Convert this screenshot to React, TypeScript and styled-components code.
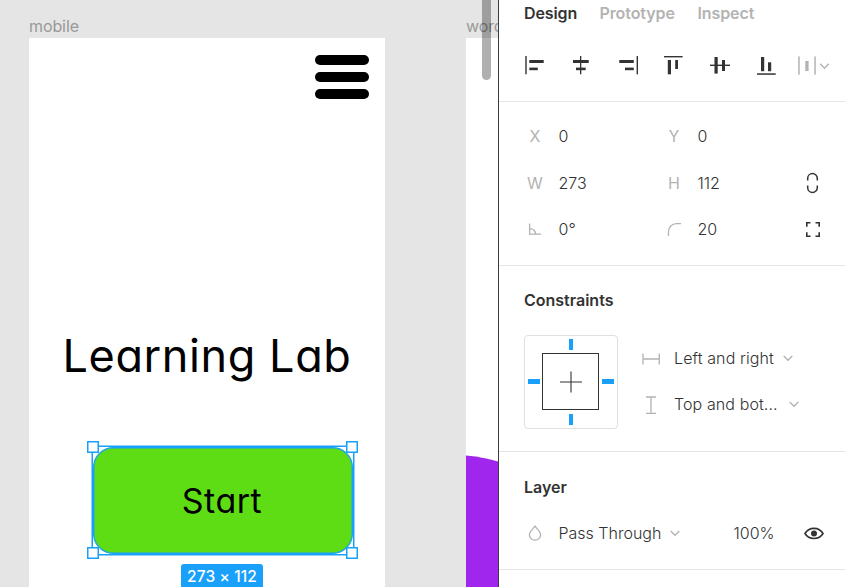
import React from "react";
import styled, { createGlobalStyle } from "styled-components";

const GlobalStyle = createGlobalStyle`
  * { box-sizing: border-box; }
  body { margin: 0; overflow: hidden; background: #fff; }
`;

const BLUE = "#18a0fb";
const INK = "#333333";
const MUTED = "#b3b3b3";

const Editor = styled.div`
  display: flex;
  width: 845px;
  height: 587px;
  overflow: hidden;
  font-family: Inter, "Liberation Sans", sans-serif;
  font-size: 16px;
  color: ${INK};
`;

/* ---------- canvas ---------- */

const Canvas = styled.main`
  position: relative;
  flex: 0 0 499px;
  overflow: hidden;
  background: #e5e5e5;
  border-right: 1px solid #3c3c3c;
`;

const FrameLabel = styled.span<{ $x: number }>`
  position: absolute;
  left: ${(p) => p.$x}px;
  top: 16px;
  line-height: 20px;
  letter-spacing: -0.1px;
  color: #999;
  white-space: nowrap;
`;

const Frame = styled.section<{ $x: number; $w: number }>`
  position: absolute;
  left: ${(p) => p.$x}px;
  top: 37.5px;
  width: ${(p) => p.$w}px;
  height: 640px;
  overflow: hidden;
  background: #fff;
`;

const Burger = styled.div`
  position: absolute;
  left: 315px;
  top: 55px;
  display: grid;
  gap: 7px;
`;

const BurgerBar = styled.i`
  width: 54px;
  height: 10px;
  border-radius: 5px;
  background: #000;
`;

const Title = styled.h1`
  position: absolute;
  left: 62.5px;
  top: 326px;
  margin: 0;
  font-size: 45px;
  line-height: 60px;
  font-weight: 400;
  font-feature-settings: "cv11";
  letter-spacing: 0.6px;
  color: #000;
  white-space: nowrap;
`;

const Disc = styled.div`
  position: absolute;
  left: -182px;
  top: 417.3px;
  width: 336px;
  height: 336px;
  border-radius: 50%;
  background: #a026ed;
`;

const Selection = styled.div`
  position: absolute;
  left: 92px;
  top: 446px;
  width: 262px;
  height: 109px;
  padding: 1px;
  background: #fff;
  box-shadow: inset 0 0 0 1px ${BLUE}, 0 0 0 0.5px ${BLUE};
`;

const StartButton = styled.div`
  display: flex;
  align-items: center;
  justify-content: center;
  height: 107px;
  padding-right: 2px;
  border: 1.5px solid ${BLUE};
  box-shadow: inset 0 0 0 0.5px ${BLUE};
  border-radius: 20px;
  background: #5edc14;
  color: #000;
  font-size: 34px;
  font-feature-settings: "cv11";
  letter-spacing: 0.5px;
`;

const Handle = styled.i<{ $right?: boolean; $bottom?: boolean }>`
  position: absolute;
  ${(p) => (p.$right ? "right: -4px;" : "left: -5px;")}
  ${(p) => (p.$bottom ? "bottom: -4px;" : "top: -5px;")}
  width: 12px;
  height: 12px;
  box-shadow: inset 0 0 0 1.5px ${BLUE};
  background: #fff;
`;

const SizeBadge = styled.div`
  position: absolute;
  left: 181px;
  top: 564px;
  width: 82px;
  height: 26px;
  border-radius: 3px;
  background: ${BLUE};
  color: #fff;
  text-align: center;
  font-size: 15.5px;
  line-height: 26px;
  font-weight: 500;
  letter-spacing: 0.1px;
  white-space: nowrap;
`;

const Scrollbar = styled.div`
  position: absolute;
  left: 482px;
  top: -20px;
  width: 9px;
  height: 100px;
  border-radius: 5px;
  background: rgba(0, 0, 0, 0.31);
`;

/* ---------- inspector ---------- */

const Panel = styled.aside`
  flex: 1;
  min-width: 0;
  background: #fff;
`;

const Section = styled.section<{ $h: number }>`
  height: ${(p) => p.$h}px;
  padding-left: 25px;
  border-bottom: 1px solid #e5e5e5;
`;

const Tabs = styled.nav`
  display: flex;
  gap: 22px;
  height: 28px;
  line-height: 26px;
`;

const Tab = styled.span<{ $active?: boolean; $w: number }>`
  font-weight: 600;
  letter-spacing: -0.1px;
  color: ${(p) => (p.$active ? INK : MUTED)};
  width: ${(p) => p.$w}px;
  white-space: nowrap;
`;

const AlignBar = styled.div`
  display: grid;
  grid-template-columns: 47px 46px 46px 47px 46px 45px 34px;
  margin: 24px 0 0 -4px;
`;

const Icon = styled.svg<{ $muted?: boolean }>`
  display: block;
  overflow: visible;
  color: ${(p) => (p.$muted ? MUTED : INK)};
`;

const Fields = styled.div`
  display: grid;
  grid-template-columns: 22px 13px 104px 22px 13px 101px 28px;
  grid-template-rows: 46px 47px 46px;
  align-items: center;
  padding-top: 11px;
`;

const FieldLabel = styled.span<{ $col: number }>`
  grid-column: ${(p) => p.$col};
  display: flex;
  justify-content: center;
  color: ${MUTED};
`;

const Value = styled.span<{ $col: number }>`
  grid-column: ${(p) => p.$col};
  margin-left: -0.5px;
  font-weight: 300;
  white-space: nowrap;
`;

const Toggle = styled.span`
  grid-column: 7;
  display: flex;
  justify-content: center;
`;

const Heading = styled.h2<{ $top: number }>`
  margin: 0;
  padding-top: ${(p) => p.$top}px;
  font-size: 16px;
  line-height: 24px;
  font-weight: 600;
`;

const ConstraintArea = styled.div`
  display: flex;
  margin-top: 23px;
`;

const ConstraintBox = styled.div`
  display: grid;
  grid-template-columns: 17px 57px 18px;
  grid-template-rows: 17px 57px 18px;
  place-items: center;
  width: 94px;
  height: 94px;
  border: 1px solid #e0e0e0;
  border-radius: 4px;
`;

const Pin = styled.i<{ $area: string; $vertical?: boolean }>`
  grid-area: ${(p) => p.$area};
  width: ${(p) => (p.$vertical ? 4 : 12)}px;
  height: ${(p) => (p.$vertical ? 11 : 5)}px;
  background: ${BLUE};
`;

const Core = styled.div`
  grid-area: 2 / 2;
  display: grid;
  place-items: center;
  width: 57px;
  height: 57px;
  border: 1px solid ${INK};
`;

const ConstraintList = styled.div`
  display: grid;
  grid-template-rows: 47px 46px;
  margin: -1px 0 0 22px;
`;

const ConstraintRow = styled.div`
  display: grid;
  grid-template-columns: 22px auto 10px;
  align-items: center;
  justify-content: start;
`;

const ConstraintName = styled.span<{ $w: number }>`
  width: ${(p) => p.$w}px;
  margin: 0 8px 0 12px;
  font-weight: 300;
  letter-spacing: 0.1px;
  white-space: nowrap;
`;

const LayerRow = styled.div`
  display: grid;
  grid-template-columns: 22px 13px 111px 64px 70px 30px;
  align-items: center;
  height: 46px;
  margin-top: 11px;
`;

type Rect = [number, number, number, number];

const alignIcons: Rect[][] = [
  [[5.3, 4, 1.4, 18.3], [9.3, 8, 14.4, 3], [9.3, 15.6, 8.5, 2.6]],
  [[13, 4, 1.3, 18.3], [6, 8, 15.7, 3], [9, 15.6, 9.7, 2.6]],
  [[23.6, 4, 1.4, 18.3], [6.3, 8, 14.5, 3], [12, 15.6, 8.8, 2.6]],
  [[5, 4, 18.6, 1.4], [8.8, 8, 3.2, 14.3], [16.2, 8, 2.8, 9]],
  [[4, 12.6, 20, 1.4], [8.5, 5, 3.2, 16.6], [16, 8, 3, 11]],
  [[5, 21.3, 18.7, 1.5], [9, 5, 3.2, 14.2], [16, 10.3, 3.2, 8.9]],
];

const AlignIcon = ({ rects }: { rects: Rect[] }) => (
  <Icon width="28" height="28">
    {rects.map(([x, y, width, height], i) => (
      <rect key={i} x={x} y={y} width={width} height={height} fill="currentColor" />
    ))}
  </Icon>
);

const Chevron = () => (
  <Icon $muted width="10" height="10" fill="none" stroke="currentColor" strokeWidth="1.3">
    <path d="M0.7 3 L5 7.3 L9.3 3" />
  </Icon>
);

export default function App() {
  return (
    <Editor>
      <GlobalStyle />
      <Canvas>
        <FrameLabel $x={29}>mobile</FrameLabel>
        <FrameLabel $x={466}>word</FrameLabel>
        <Frame $x={29.4} $w={356} />
        <Frame $x={466} $w={60}>
          <Disc />
        </Frame>
        <Burger>
          <BurgerBar />
          <BurgerBar />
          <BurgerBar />
        </Burger>
        <Title>Learning Lab</Title>
        <Selection>
          <StartButton>Start</StartButton>
          <Handle />
          <Handle $right />
          <Handle $bottom />
          <Handle $right $bottom />
        </Selection>
        <SizeBadge>273 × 112</SizeBadge>
        <Scrollbar />
      </Canvas>

      <Panel>
        <Section $h={102}>
          <Tabs>
            <Tab $active $w={53.5}>Design</Tab>
            <Tab $w={76}>Prototype</Tab>
            <Tab $w={57}>Inspect</Tab>
          </Tabs>
          <AlignBar>
            {alignIcons.map((rects, i) => (
              <AlignIcon key={i} rects={rects} />
            ))}
            <Icon $muted width="34" height="28">
              <g fill="currentColor">
                <rect x="1.2" y="4.4" width="1.5" height="18.3" />
                <rect x="8.3" y="9" width="3.3" height="10" />
                <rect x="17.3" y="4.4" width="1.5" height="18.3" />
              </g>
              <path d="M23.2 11.8 L27.5 16.2 L31.8 11.8" fill="none" stroke="currentColor" strokeWidth="1.4" />
            </Icon>
          </AlignBar>
        </Section>

        <Section $h={164}>
          <Fields>
            <FieldLabel $col={1}>X</FieldLabel>
            <Value $col={3}>0</Value>
            <FieldLabel $col={4}>Y</FieldLabel>
            <Value $col={6}>0</Value>

            <FieldLabel $col={1}>W</FieldLabel>
            <Value $col={3}>273</Value>
            <FieldLabel $col={4}>H</FieldLabel>
            <Value $col={6}>112</Value>
            <Toggle>
              <Icon width="14" height="22" fill="none" stroke="currentColor" strokeWidth="1.5">
                <path d="M1.7 8.5 V6.3 A4.8 4.8 0 0 1 11.3 6.3 V8.5 M1.7 13.5 V15.7 A4.8 4.8 0 0 0 11.3 15.7 V13.5" />
              </Icon>
            </Toggle>

            <FieldLabel $col={1}>
              <Icon $muted width="14" height="14" fill="none" stroke="currentColor" strokeWidth="1.3">
                <path d="M1.6 1.5 V12.2 H13 M1.6 6.6 A5.6 5.6 0 0 1 7.6 12.2" />
              </Icon>
            </FieldLabel>
            <Value $col={3}>0°</Value>
            <FieldLabel $col={4}>
              <Icon $muted width="14" height="14" fill="none" stroke="currentColor" strokeWidth="1.3">
                <path d="M1.5 14 V9.8 A8 8 0 0 1 9.5 1.6 H14" />
              </Icon>
            </FieldLabel>
            <Value $col={6}>20</Value>
            <Toggle>
              <Icon width="14" height="16" fill="none" stroke="currentColor" strokeWidth="1.6">
                <path d="M0.8 5.8 V1.8 H4.5 M9.5 1.8 H13.2 V5.8 M0.8 11.2 V15.2 H4.5 M9.5 15.2 H13.2 V11.2" />
              </Icon>
            </Toggle>
          </Fields>
        </Section>

        <Section $h={186}>
          <Heading $top={22}>Constraints</Heading>
          <ConstraintArea>
            <ConstraintBox>
              <Pin $area="1 / 2" $vertical />
              <Pin $area="2 / 1" />
              <Core>
                <Icon width="22" height="22" stroke="currentColor" strokeWidth="1.1">
                  <path d="M11 0.5 V21.5 M0 11 H22" />
                </Icon>
              </Core>
              <Pin $area="2 / 3" />
              <Pin $area="3 / 2" $vertical />
            </ConstraintBox>
            <ConstraintList>
              <ConstraintRow>
                <Icon $muted width="22" height="18" stroke="currentColor" strokeWidth="1.3">
                  <path d="M3 4.5 V15.5 M19.3 4.5 V15.5 M3 10 H19.3" />
                </Icon>
                <ConstraintName $w={101}>Left and right</ConstraintName>
                <Chevron />
              </ConstraintRow>
              <ConstraintRow>
                <Icon $muted width="22" height="18" stroke="currentColor" strokeWidth="1.3">
                  <path d="M6 2 H16 M6 18.3 H16 M11 2 V18.3" />
                </Icon>
                <ConstraintName $w={107}>Top and bot...</ConstraintName>
                <Chevron />
              </ConstraintRow>
            </ConstraintList>
          </ConstraintArea>
        </Section>

        <Section $h={118}>
          <Heading $top={23}>Layer</Heading>
          <LayerRow>
            <Icon $muted width="22" height="16" fill="none" stroke="currentColor" strokeWidth="1.3">
              <path d="M11 1.2 C9.5 3.4 5.4 6.4 5.4 9.8 A5.6 5.4 0 0 0 16.6 9.8 C16.6 6.4 12.5 3.4 11 1.2 Z" />
            </Icon>
            <Value $col={3}>Pass Through</Value>
            <Chevron />
            <Value $col={5}>100%</Value>
            <Icon width="20" height="14" fill="none" stroke="currentColor" strokeWidth="1.6">
              <path d="M1 7.5 C4.8 0.6 15.2 0.6 19 7.5 C15.2 14.1 4.8 14.1 1 7.5 Z" />
              <circle cx="10" cy="7.5" r="3" fill="currentColor" stroke="none" />
            </Icon>
          </LayerRow>
        </Section>
      </Panel>
    </Editor>
  );
}
